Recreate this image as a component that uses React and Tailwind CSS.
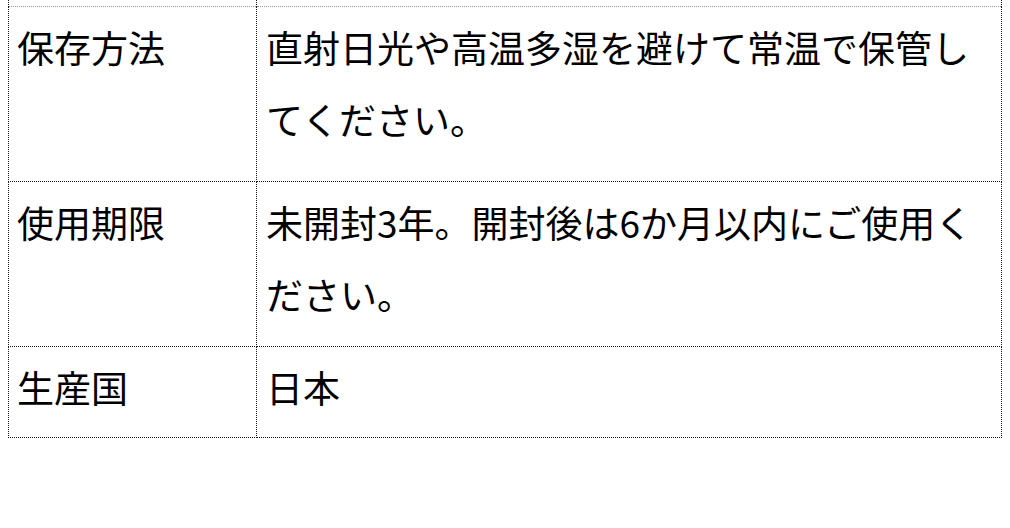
import React from 'react';

const rows = [
  { label: '保存方法', value: '直射日光や高温多湿を避けて常温で保管してください。', pb: 'pb-[26px]' },
  { label: '使用期限', value: '未開封3年。開封後は6か月以内にご使用ください。', pb: 'pb-[16px]' },
  { label: '生産国', value: '日本', pb: 'pb-[14px]' },
];

const App = () => {
  return (
    <div className="bg-white w-[1010px] h-[528px] overflow-hidden pl-[8px] font-['Noto_Sans_CJK_JP',sans-serif] text-black">
      <table className="border-collapse w-[994px] table-fixed">
        <colgroup>
          <col className="w-[248px]" />
          <col />
        </colgroup>
        <tbody>
          {/* tail of the row above, scrolled out of view */}
          <tr className="h-[6px]">
            <td className="p-0 border-x border-dotted border-[#1a1a1a]"></td>
            <td className="p-0 border-x border-dotted border-[#1a1a1a]"></td>
          </tr>
          {rows.map((row, i) => (
            <tr key={row.label}>
              <td
                className={`align-top border border-dotted border-[#1a1a1a] pl-[8px] pr-[8px] pt-[4px] ${row.pb} text-[37px] leading-[72px] ${i === 0 ? 'border-t-[#999]' : ''}`}
              >
                {row.label}
              </td>
              <td
                className={`align-top border border-dotted border-[#1a1a1a] pl-[9px] pr-[20px] pt-[4px] ${row.pb} text-[37px] leading-[72px] ${i === 0 ? 'border-t-[#999]' : ''}`}
              >
                {row.value}
              </td>
            </tr>
          ))}
        </tbody>
      </table>
    </div>
  );
};

export default App;
